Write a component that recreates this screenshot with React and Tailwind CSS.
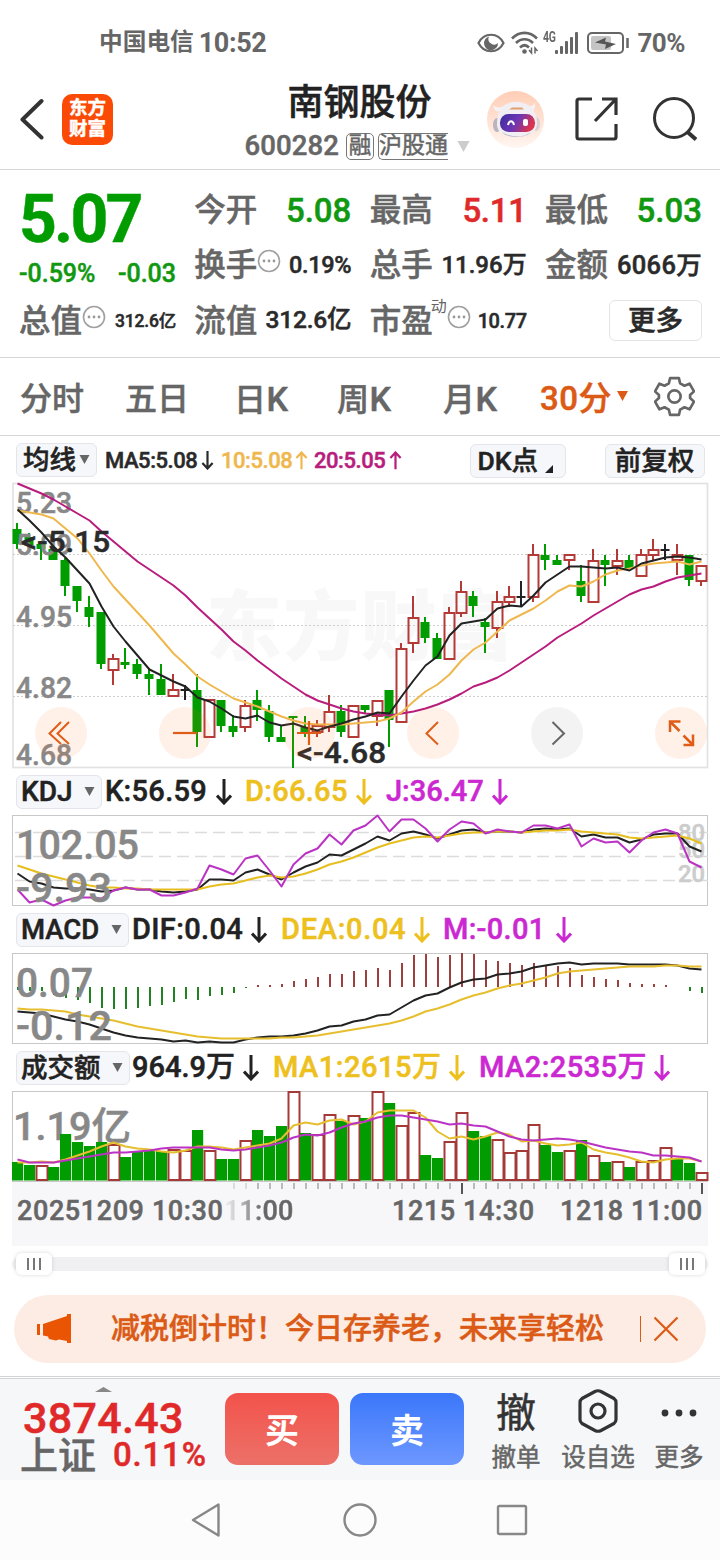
const UP = "#b43a38";
const DOWN = "#009c00";

// [type, high, top, bottom, low]
const candles = [
  ["g", 523, 529, 544, 549], ["g", 533, 537, 545, 549], ["g", 541, 544, 549, 560], ["g", 549, 549, 560, 560],
  ["g", 558, 560, 586, 596], ["g", 586, 586, 601, 612], ["g", 596, 607, 617, 627], ["g", 612, 612, 664, 669],
  ["r", 654, 658, 670, 685], ["g", 648, 662, 665, 669], ["g", 659, 664, 674, 679], ["g", 669, 674, 679, 695],
  ["g", 664, 679, 695, 695], ["r", 674, 689, 696, 696], ["b", 685, 689, 690, 700], ["g", 674, 690, 732, 747],
  ["r", 699, 699, 737, 737], ["g", 700, 700, 726, 732], ["g", 715, 726, 732, 737], ["r", 700, 705, 727, 732],
  ["g", 690, 700, 710, 721], ["g", 705, 711, 737, 742], ["g", 726, 737, 742, 742], ["g", 716, 716, 718, 768],
  ["g", 716, 727, 732, 737], ["r", 720, 725, 732, 737], ["r", 695, 711, 727, 732], ["g", 705, 711, 732, 737],
  ["r", 705, 705, 737, 737], ["g", 705, 705, 710, 714], ["r", 700, 700, 716, 726], ["g", 690, 690, 720, 747],
  ["r", 643, 648, 722, 722], ["r", 596, 617, 643, 653], ["g", 617, 622, 638, 643], ["g", 633, 638, 659, 659],
  ["r", 607, 612, 659, 659], ["r", 581, 591, 613, 617], ["g", 591, 596, 606, 617], ["g", 618, 622, 627, 653],
  ["r", 591, 601, 628, 638], ["r", 586, 596, 602, 607], ["b", 581, 596, 597, 607], ["r", 544, 554, 597, 602],
  ["g", 544, 555, 560, 570], ["g", 555, 560, 565, 565], ["r", 554, 554, 560, 570], ["g", 565, 581, 596, 602],
  ["r", 549, 560, 602, 602], ["g", 555, 560, 565, 586], ["r", 549, 560, 566, 575], ["g", 555, 560, 569, 569],
  ["r", 549, 554, 576, 576], ["r", 539, 549, 555, 560], ["b", 544, 549, 550, 560], ["r", 544, 554, 560, 575],
  ["g", 555, 555, 580, 586], ["r", 565, 565, 581, 586],
];

const ma5 = [509, 520, 532, 546, 557, 570, 583, 606, 626, 641, 655, 669, 675, 681, 686, 697, 701, 708, 716, 718, 715, 722, 725, 723, 727, 730, 726, 723, 719, 716, 712, 713, 696, 680, 665, 656, 635, 623, 621, 619, 608, 605, 606, 595, 582, 574, 566, 566, 567, 568, 567, 570, 563, 560, 557, 556, 557, 559];
const ma10 = [510, 512, 514, 518, 528, 538, 553, 570, 586, 599, 612, 625, 639, 653, 664, 676, 684, 691, 698, 702, 706, 711, 716, 720, 723, 724, 724, 724, 723, 722, 721, 718, 712, 701, 691, 684, 674, 660, 649, 642, 631, 620, 614, 608, 600, 591, 585, 586, 581, 574, 570, 568, 565, 563, 562, 561, 564, 561];
const ma20 = [483, 488, 493, 499, 506, 513, 520, 531, 541, 551, 561, 569, 577, 585, 595, 607, 618, 629, 641, 650, 660, 669, 678, 686, 694, 700, 704, 708, 711, 713, 714, 715, 713, 711, 708, 704, 699, 693, 686, 682, 677, 670, 662, 654, 646, 637, 630, 623, 615, 608, 601, 594, 589, 586, 581, 577, 575, 573];

const kLine = [873, 881, 883, 887, 888, 888, 889, 891, 890, 887, 889, 889, 891, 892, 891, 889, 879, 879, 880, 872, 869, 874, 879, 872, 866, 862, 854, 855, 849, 843, 836, 840, 833, 831, 834, 838, 834, 830, 829, 832, 831, 831, 832, 829, 828, 829, 828, 836, 834, 837, 837, 842, 839, 834, 833, 833, 846, 851];
const dLine = [865, 869, 873, 876, 879, 882, 885, 887, 887, 888, 888, 889, 889, 889, 889, 889, 886, 884, 883, 880, 877, 875, 877, 876, 873, 869, 864, 861, 857, 852, 847, 843, 840, 837, 836, 837, 835, 833, 832, 832, 831, 831, 832, 831, 830, 830, 829, 831, 832, 833, 834, 837, 838, 837, 836, 835, 838, 843];
const jLine = [889, 902, 899, 905, 900, 897, 897, 898, 890, 887, 889, 889, 895, 895, 892, 888, 865, 869, 874, 858, 855, 870, 886, 864, 853, 848, 834, 844, 830, 825, 815, 831, 819, 819, 828, 841, 829, 821, 823, 833, 829, 831, 832, 825, 825, 828, 824, 846, 838, 842, 841, 852, 840, 832, 829, 833, 861, 867];

const macd = [990, 991, 991, 995, 998, 1000, 1003, 1008, 1009, 1009, 1008, 1006, 1005, 1002, 999, 1000, 996, 995, 993, 988, 985, 985, 984, 981, 979, 977, 974, 974, 971, 970, 968, 970, 963, 955, 954, 957, 955, 953, 954, 960, 961, 963, 965, 963, 966, 966, 968, 975, 977, 979, 980, 983, 984, 984, 985, 987, 991, 993];
const dif = [1011, 1012, 1013, 1016, 1019, 1021, 1024, 1028, 1032, 1035, 1037, 1038, 1039, 1041, 1040, 1042, 1041, 1042, 1042, 1039, 1037, 1036, 1036, 1035, 1033, 1030, 1026, 1025, 1021, 1019, 1015, 1014, 1007, 1000, 995, 993, 987, 982, 979, 978, 974, 973, 971, 967, 965, 963, 962, 964, 963, 963, 963, 964, 964, 964, 964, 965, 968, 969];
const dea = [1008, 1009, 1009, 1010, 1011, 1014, 1016, 1018, 1020, 1023, 1026, 1028, 1030, 1032, 1034, 1036, 1037, 1038, 1038, 1038, 1038, 1038, 1037, 1037, 1036, 1035, 1033, 1031, 1029, 1027, 1025, 1023, 1020, 1016, 1011, 1008, 1004, 999, 995, 992, 988, 985, 983, 980, 977, 973, 971, 970, 969, 968, 967, 966, 966, 966, 965, 965, 966, 966];

const volColors = "ggrgggggrggggrrgrggrgggrgrrgrgrgrrggrrggrrrrggrgrgrgrrrggr";
const vol = [1162, 1165, 1165, 1167, 1134, 1142, 1146, 1142, 1144, 1157, 1152, 1151, 1151, 1149, 1150, 1130, 1150, 1159, 1159, 1140, 1130, 1136, 1126, 1091, 1133, 1134, 1114, 1121, 1115, 1118, 1091, 1103, 1125, 1112, 1155, 1158, 1141, 1112, 1131, 1136, 1139, 1152, 1150, 1124, 1145, 1152, 1150, 1140, 1155, 1162, 1161, 1167, 1161, 1160, 1147, 1159, 1163, 1172];
const volMa1 = [1162, 1162, 1161, 1162, 1159, 1155, 1151, 1146, 1142, 1146, 1148, 1149, 1151, 1152, 1150, 1146, 1146, 1147, 1149, 1147, 1145, 1143, 1138, 1125, 1122, 1124, 1120, 1119, 1124, 1121, 1112, 1110, 1110, 1110, 1117, 1131, 1138, 1136, 1139, 1136, 1132, 1134, 1141, 1140, 1143, 1145, 1144, 1142, 1149, 1152, 1154, 1157, 1161, 1162, 1159, 1158, 1158, 1161];
const volMa2 = [1159, 1162, 1162, 1162, 1160, 1158, 1156, 1154, 1152, 1152, 1151, 1150, 1148, 1147, 1147, 1147, 1147, 1149, 1150, 1149, 1147, 1145, 1142, 1137, 1134, 1135, 1132, 1127, 1123, 1121, 1117, 1115, 1115, 1117, 1119, 1121, 1124, 1123, 1125, 1126, 1131, 1136, 1139, 1140, 1139, 1138, 1139, 1141, 1144, 1147, 1149, 1151, 1152, 1155, 1155, 1156, 1157, 1161];

const cx = (i) => 17.5 + i * 12;

function Line({ data, color }) {
  return (
    <polyline
      points={data.map((y, i) => `${cx(i)},${y + 0.5}`).join(" ")}
      fill="none"
      stroke={color}
      strokeWidth="2"
      strokeLinejoin="round"
    />
  );
}

function Label({ x = 17, y, w, size = 29.5, color = "#888888", children }) {
  return (
    <text x={x} y={y} fontSize={size} fill={color} stroke={color} strokeWidth="0.5" textLength={w} lengthAdjust="spacingAndGlyphs" className="font-medium">
      {children}
    </text>
  );
}

function Arrow({ up, className = "h-[26px] w-4" }) {
  return (
    <svg viewBox="0 0 16 26" className={`shrink-0 ${className}`} fill="none" stroke="currentColor" strokeWidth="3">
      <path d={up ? "M8 25V2M1 9.5L8 2l7 7.5" : "M8 0v24M1 16.5L8 24l7-7.5"} />
    </svg>
  );
}

function Triangle({ className }) {
  return (
    <svg viewBox="0 0 10 9" className={className} fill="currentColor">
      <path d="M0 0h10L5 9z" />
    </svg>
  );
}

function Chip({ className, children }) {
  return (
    <button className={`flex h-[34px] shrink-0 items-center rounded-md border border-[#e3e5ea] bg-[#f6f7fa] font-medium text-[#222] ${className}`}>
      {children}
    </button>
  );
}

function Reading({ className, children }) {
  return (
    <div className={`flex shrink-0 items-center justify-between pt-px text-[29px] font-medium ${className}`}>
      <span>{children}</span>
      <Arrow />
    </div>
  );
}

function Dots() {
  return (
    <svg viewBox="0 0 24 24" className="mb-2 size-6 shrink-0" fill="#999">
      <circle cx="12" cy="12" r="10.5" fill="none" stroke="#a0a0a0" strokeWidth="1.6" />
      <circle cx="7" cy="12" r="1.4" />
      <circle cx="12" cy="12" r="1.4" />
      <circle cx="17" cy="12" r="1.4" />
    </svg>
  );
}

function StatusBar() {
  return (
    <div className="flex h-[84px] items-center pt-0.5 pr-[35px] pl-[99px] font-bold text-[#666] [-webkit-text-stroke:0]">
      <span className="text-[23.7px]">中国电信</span>
      <span className="ml-[5px] text-[27px] tracking-[-0.4px]">10:52</span>
      <div className="ml-auto flex items-center pb-px">
        <svg viewBox="0 0 28 20" className="h-5 w-7" fill="none" stroke="#666" strokeWidth="2.2">
          <path d="M1.5 10C7-1 21-1 26.5 10 21 21 7 21 1.5 10z" />
          <path d="M12 3.5A7 7 0 1 0 21 10a5.500 5.500 0 0 1-7 0.500 5 5 0 0 1-2-7z" fill="#666" stroke="none" />
        </svg>
        <svg viewBox="0 0 28 24" className="ml-1.5 h-6 w-7" fill="none" stroke="#666" strokeWidth="2.6">
          <path d="M1 7.5C8 0 19 0 26 7.500M5 12c5-5 12-5 17 0M9 16.500c3-3 6-3 9 0" />
          <circle cx="13.500" cy="20.500" r="2.300" fill="#666" stroke="none" />
          <path d="M20.500 16.500v5.500l-2.500-3M24 22.500v-5.500l2.500 3" strokeWidth="1.500" />
        </svg>
        <span className="mb-3 ml-1 w-3">
          <span className="inline-block origin-left scale-x-75 text-[14px] tracking-[-0.3px]">4G</span>
        </span>
        <svg viewBox="0 0 24 22" className="h-[22px] w-6" fill="#666">
          <rect y="18" width="3" height="4" rx="1" />
          <rect x="5" y="14" width="3" height="8" rx="1" />
          <rect x="10" y="9" width="3" height="13" rx="1" />
          <rect x="15" y="5" width="3" height="17" rx="1" />
          <rect x="20" width="3" height="22" rx="1" />
        </svg>
        <svg viewBox="0 0 42 22" className="ml-2 h-[22px] w-[42px]">
          <rect x="1" y="1" width="35" height="20" rx="4" fill="none" stroke="#666" strokeWidth="2" />
          <rect x="4" y="4" width="20" height="14" rx="2" fill="#c4c4c4" />
          <path d="M8 10.500l11-5-1 4 11 2.500-11 5 1-4.500z" fill="#555" />
          <path d="M40.500 6v10" stroke="#666" strokeWidth="2.500" />
        </svg>
        <span className="ml-2 pt-0.5 text-[26px] tracking-[-0.500px]">70%</span>
      </div>
    </div>
  );
}

function Robot() {
  return (
    <svg viewBox="0 0 57 57" className="size-[57px]">
      <defs>
        <linearGradient id="halo" x1="0" y1="0" x2="0" y2="1">
          <stop offset="0" stopColor="#ffcdb5" />
          <stop offset="1" stopColor="#fff6f1" />
        </linearGradient>
        <linearGradient id="visor" x1="0" y1="0" x2="1" y2="0.300">
          <stop offset="0" stopColor="#3c2c9c" />
          <stop offset="0.550" stopColor="#6d36b4" />
          <stop offset="1" stopColor="#dc3550" />
        </linearGradient>
      </defs>
      <circle cx="28.500" cy="28.500" r="28.500" fill="url(#halo)" />
      <ellipse cx="10" cy="34" rx="4" ry="7" fill="#b9b4bd" />
      <ellipse cx="49" cy="33" rx="4" ry="7" fill="#d8d2d6" />
      <path d="M6 14c1 6 4 7 8 6l4-5c-5 2-9 2-12-1zM48 12c1 6-2 8-6 8l-4-5c5 1 8 0 10-3z" fill="#f4f2f4" />
      <path d="M10 33c0-14 6-22 19-22s21 8 21 21c0 9-8 14-20 14s-20-4-20-13z" fill="#f1eff3" />
      <path d="M15 41c8 6 22 6 29 0-4 6-24 7-29 0z" fill="#aaa5b4" />
      <path d="M22 18.500l3-2h10l2 2z" fill="#e0a070" />
      <rect x="13" y="23" width="35" height="18" rx="8.500" fill="url(#visor)" />
      <path d="M21 34c1-5 5-5 6 0" fill="none" stroke="#fff" strokeWidth="2" />
      <rect x="36" y="28" width="5" height="7" rx="2" fill="#fff" />
    </svg>
  );
}

function Header() {
  return (
    <header className="flex h-[86px] border-b border-[#d6d6d6]">
      <svg viewBox="0 0 26 42" className="mt-[14px] ml-[19px] h-[42px] w-[26px]" fill="none" stroke="#333" strokeWidth="4" strokeLinecap="round" strokeLinejoin="round">
        <path d="M22.500 3L3.500 21.500l19 18" />
      </svg>
      <div className="mt-[10px] ml-[17px] flex h-[51px] w-[51px] flex-col items-center justify-center rounded-[10px] bg-[#fb4a06] pb-px text-[18.500px] leading-[21px] font-bold text-white">
        <span>东方</span>
        <span>财富</span>
      </div>
      <div className="ml-[131.500px] flex w-[231px] flex-col">
        <h1 className="ml-[43px] h-10 text-[36px] leading-[38px] font-medium text-[#222]">南钢股份</h1>
        <div className="flex h-11 items-center text-[#666]">
          <span className="text-[27.500px] font-medium tracking-[0.100px]">600282</span>
          <span className="ml-[7px] flex h-[27px] w-7 items-center justify-center rounded-[5px] border-[1.500px] border-[#777] text-[22.500px]">融</span>
          <span className="ml-1 flex h-[27px] w-[70px] items-center justify-center rounded-l-[5px] border-[1.500px] border-r-0 border-[#777] text-[23px]">沪股通</span>
          <Triangle className="ml-[7px] h-[11px] w-[17px] shrink-0 text-[#ccc]" />
        </div>
      </div>
      <div className="mt-[7px] ml-[11px]">
        <Robot />
      </div>
      <svg viewBox="0 0 44 44" className="mt-[13px] ml-[31px] size-11" fill="none" stroke="#333" strokeWidth="3.200">
        <path d="M17 2H4a2 2 0 0 0-2 2v36a2 2 0 0 0 2 2h35a2 2 0 0 0 2-2V27M27 2h14v16M41 2L20 24" />
      </svg>
      <svg viewBox="0 0 46 46" className="mt-[12px] ml-[33px] size-[46px]" fill="none" stroke="#333" strokeWidth="3">
        <circle cx="22" cy="22" r="19.500" />
        <path d="M35.500 36l8.500 7.500" strokeWidth="4" />
      </svg>
    </header>
  );
}

function Cell({ label, children }) {
  return (
    <div className="flex h-[55.500px] w-[157px] items-center">
      <span className="shrink-0 pt-px text-[31.500px] text-[#666]">{label}</span>
      {children}
    </div>
  );
}

function Quote() {
  return (
    <section className="flex h-[188px] justify-between border-b border-[#d6d6d6] pt-[12px] pr-[18px] pl-[19px] font-medium text-[#2a2a2a]">
      <div className="w-[157px]">
        <div className="h-[67px] text-[66px] leading-[76px] font-bold tracking-[-2.800px] text-[#009c00]">5.07</div>
        <div className="flex h-[44px] items-center justify-between pt-1.5 text-[25px] text-[#119811]">
          <span>-0.59%</span>
          <span>-0.03</span>
        </div>
        <Cell label="总值">
          <Dots />
          <span className="ml-auto text-[17.500px] tracking-[-0.200px]">312.6亿</span>
        </Cell>
      </div>
      <div>
        <Cell label="今开"><span className="ml-auto pt-px text-[33px] text-[#119811]">5.08</span></Cell>
        <Cell label="换手">
          <Dots />
          <span className="ml-auto text-[23.500px] tracking-[-0.300px]">0.19%</span>
        </Cell>
        <Cell label="流值"><span className="ml-auto text-[24.500px] tracking-[-0.200px]">312.6亿</span></Cell>
      </div>
      <div>
        <Cell label="最高"><span className="ml-auto pt-px text-[33px] tracking-[-0.300px] text-[#e02a2a]">5.11</span></Cell>
        <Cell label="总手"><span className="ml-auto text-[24px]">11.96万</span></Cell>
        <Cell label="市盈">
          <span className="-ml-0.5 mb-7 text-[16px] font-normal text-[#666] [-webkit-text-stroke:0]">动</span>
          <Dots />
          <span className="ml-auto text-[20px] tracking-[-0.400px]">10.77</span>
        </Cell>
      </div>
      <div>
        <Cell label="最低"><span className="ml-auto pt-px text-[33px] text-[#119811]">5.03</span></Cell>
        <Cell label="金额"><span className="ml-auto text-[25.500px] tracking-[0.300px]">6066万</span></Cell>
        <div className="flex h-[54px] items-center justify-end">
          <button className="h-[41px] w-[93px] rounded-md border border-[#e4e4e4] text-[27.500px] leading-[40px]">更多</button>
        </div>
      </div>
    </section>
  );
}

function Tabs() {
  return (
    <nav className="flex h-[78px] items-center border-b border-[#d6d6d6] pt-[5px] pl-5 text-[32px] font-medium text-[#666]">
      <span className="w-[105px]">分时</span>
      <span className="w-[109px]">五日</span>
      <span className="w-[103px] tracking-[0.500px]">日<span className="text-[34px]">K</span></span>
      <span className="w-[106px] tracking-[0.500px]">周<span className="text-[34px]">K</span></span>
      <span className="w-[97px] tracking-[0.500px]">月<span className="text-[34px]">K</span></span>
      <span className="w-[77px] text-[33px] tracking-[0.500px] text-[#db5a15]">30分</span>
      <Triangle className="mb-1.5 h-[10px] w-[11px] text-[#db5a15]" />
      <svg viewBox="0 0 40 40" className="mb-1.5 ml-[26px] size-[41px]" fill="none" stroke="#666" strokeWidth="2.600" strokeLinejoin="round">
        <path d="M15.700 2h8.600l1.200 5.200 4.200 2.300 5-2 4.300 7.500-3.800 3.600v2.800l3.800 3.600-4.300 7.500-5-2-4.200 2.300-1.200 5.200h-8.600l-1.200-5.200-4.200-2.300-5 2L1 25l3.800-3.600v-2.800L1 15l4.300-7.500 5 2 4.200-2.300z" />
        <circle cx="20" cy="20" r="6" />
      </svg>
    </nav>
  );
}

function ChartBar() {
  return (
    <div className="flex h-[47px] items-center pl-4 text-[22px] font-medium tracking-[-0.450px]">
      <Chip className="w-[81px] justify-between pr-1.5 pl-1.5 text-[26.500px] tracking-normal">
        均线
        <Triangle className="h-[9px] w-[11px] text-[#666]" />
      </Chip>
      <div className="ml-2 flex w-[109px] items-center justify-between pt-0.5 text-[#2a2a2a]">
        <span>MA5:5.08</span>
        <Arrow className="h-[19px] w-[13px]" />
      </div>
      <div className="ml-[7px] flex w-[87px] items-center justify-between pt-0.5 text-[#efb84e]">
        <span>10:5.08</span>
        <Arrow up className="h-[19px] w-[13px]" />
      </div>
      <div className="ml-[6px] flex w-[88px] items-center justify-between pt-0.5 text-[#b81d7d]">
        <span>20:5.05</span>
        <Arrow up className="h-[19px] w-[13px]" />
      </div>
      <Chip className="mt-0.5 ml-[67.500px] w-[96px] pl-[7px] text-[26.500px] tracking-normal">
        DK点
        <svg viewBox="0 0 8 8" className="mt-4 ml-[7px] size-2">
          <path d="M8 0v8H0z" fill="#222" />
        </svg>
      </Chip>
      <Chip className="mt-0.5 ml-[39px] w-[100px] justify-center text-[26.500px] tracking-normal">前复权</Chip>
    </div>
  );
}

function KChart() {
  return (
    <div className="relative mx-3 h-[285px]">
      <svg viewBox="12 483 696 285" className="h-[285px] w-[696px] overflow-visible">
        <text x="206" y="654" fontSize="76" fill="#f8f8f8" textLength="308" className="font-black">东方财富</text>
        <rect x="13" y="483.500" width="694.500" height="284" fill="none" stroke="#e2e2e2" strokeWidth="1.700" />
        {[554.5, 625.5, 696.5].map((y) => (
          <path key={y} d={`M13 ${y}H708`} stroke="#cfcfcf" strokeDasharray="2 2" />
        ))}
        {candles.map(([type, high, top, bottom, low], i) => {
          const x = cx(i) - 0.5;
          if (type === "r") {
            return (
              <g key={i} stroke={UP} strokeWidth="2" fill="none">
                <path d={`M${x} ${high}V${top}M${x} ${bottom}V${low}`} />
                <rect x={x - 4.5} y={top + 1} width="10" height={bottom - top - 1} />
              </g>
            );
          }
          const color = type === "g" ? DOWN : "#222";
          return (
            <g key={i} fill={color}>
              <rect x={x - 1} y={high} width="2" height={low - high} />
              <rect x={x - 4.5} y={top} width="9" height={type === "g" ? bottom - top : 2} />
            </g>
          );
        })}
        <Label x="16" y="513" w="56">5.23</Label>
        <Label x="16" y="555" w="56">5.09</Label>
        <Label x="16" y="627" w="56">4.95</Label>
        <Label x="16" y="698" w="56">4.82</Label>
        <Label x="16" y="765" w="56">4.68</Label>
        <Line data={ma20} color="#b81d7d" />
        <Line data={ma10} color="#efb84e" />
        <Line data={ma5} color="#222222" />
        <Label x="21" y="552" w="89" color="#2a2a2a">&lt;-5.15</Label>
        <Label x="297" y="763" w="89" color="#2a2a2a">&lt;-4.68</Label>
      </svg>
      <div className="absolute top-[224px] left-[23px] flex gap-[72px] text-[#e05d18] [&>button]:size-[52px] [&>button]:rounded-full [&>button]:bg-[#fb6a20]/10">
        <button>
          <svg viewBox="0 0 52 52" fill="none" stroke="currentColor" strokeWidth="2"><path d="M26 15L14.500 26.500 26 37M34 15L22.500 26.500 34 37" /></svg>
        </button>
        <button>
          <svg viewBox="0 0 52 52" fill="none" stroke="currentColor" strokeWidth="2.200"><path d="M14 26h24" /></svg>
        </button>
        <button>
          <svg viewBox="0 0 52 52" fill="none" stroke="currentColor" strokeWidth="2.200"><path d="M14 26h24M26 14v24" /></svg>
        </button>
        <button>
          <svg viewBox="0 0 52 52" fill="none" stroke="currentColor" strokeWidth="2"><path d="M31 15L19.500 26.500 31 37.500" /></svg>
        </button>
        <button className="bg-[#888]/10! text-[#666]">
          <svg viewBox="0 0 52 52" fill="none" stroke="currentColor" strokeWidth="2"><path d="M21.500 15L33 26.500 21.500 37.500" /></svg>
        </button>
        <button>
          <svg viewBox="0 0 52 52" fill="none" stroke="currentColor" strokeWidth="2.500"><path d="M15 25V14.500h10.500M15 14.500l9.500 9.500M28.500 38H38V27.500M38 38l-9.500-9.500" /></svg>
        </button>
      </div>
    </div>
  );
}

function Kdj() {
  return (
    <>
      <div className="flex h-[47px] items-center pl-4">
        <Chip className="w-[86px] justify-between pr-1.5 pl-1 text-[28px]">
          KDJ
          <Triangle className="h-[9px] w-[11px] text-[#666]" />
        </Chip>
        <Reading className="ml-[3px] w-[127px] tracking-[0.300px] text-[#222]">K:56.59</Reading>
        <Reading className="ml-[13px] w-[127px] tracking-[0.300px] text-[#edc01e]">D:66.65</Reading>
        <Reading className="ml-[14px] w-[122px] text-[#cb28d2]">J:36.47</Reading>
      </div>
      <svg viewBox="12 815 696 91" className="mx-3 h-[91px] w-[696px] overflow-visible">
        <rect x="12.500" y="815.500" width="695" height="90" fill="none" stroke="#c8c8c8" />
        {[832.5, 856.5, 880.5].map((y) => (
          <path key={y} d={`M15 ${y}H708`} stroke="#dcdcdc" strokeWidth="1.500" strokeDasharray="12 6" />
        ))}
        <Label x="678" y="841" w="27" size="23" color="#cccccc">80</Label>
        <Label x="678" y="858" w="27" size="23" color="#cccccc">50</Label>
        <Label x="678" y="881.500" w="27" size="23" color="#cccccc">20</Label>
        <Line data={kLine} color="#222222" />
        <Line data={dLine} color="#e6be1e" />
        <Line data={jLine} color="#bb33c4" />
        <Label x="16" y="858.500" w="123" size="41">102.05</Label>
        <Label x="16" y="902" w="96" size="41">-9.93</Label>
      </svg>
    </>
  );
}

function Macd() {
  return (
    <>
      <div className="flex h-[47px] items-center pl-4">
        <Chip className="w-[113px] justify-between pr-1.5 pl-1 text-[27.500px]">
          MACD
          <Triangle className="h-[9px] w-[11px] text-[#666]" />
        </Chip>
        <Reading className="ml-[3px] w-[135px] tracking-[0.350px] text-[#222]">DIF:0.04</Reading>
        <Reading className="ml-[14px] w-[149px] tracking-[0.700px] text-[#edc01e]">DEA:0.04</Reading>
        <Reading className="ml-[13px] w-[129px] tracking-[0.300px] text-[#cb28d2]">M:-0.01</Reading>
      </div>
      <svg viewBox="12 953 696 91" className="mx-3 h-[91px] w-[696px] overflow-visible">
        <rect x="12.500" y="953.500" width="695" height="90" fill="none" stroke="#c8c8c8" />
        {macd.map((y, i) => (
          <path key={i} d={`M${cx(i) + 0.5} 987V${y}`} stroke={y < 987 ? "#9c403e" : "#218221"} strokeWidth="2" />
        ))}
        <Line data={dif} color="#222222" />
        <Line data={dea} color="#e6be2e" />
        <Label x="16" y="996.500" w="77" size="41">0.07</Label>
        <Label x="16" y="1040" w="96" size="41">-0.12</Label>
      </svg>
    </>
  );
}

function Volume() {
  return (
    <>
      <div className="flex h-[47px] items-center pl-4">
        <Chip className="w-[114px] justify-between pr-1.5 pl-1 text-[26.500px]">
          成交额
          <Triangle className="h-[9px] w-[11px] text-[#666]" />
        </Chip>
        <Reading className="ml-[2px] w-[127px] text-[#222]">964.9万</Reading>
        <Reading className="ml-[14px] w-[192px] tracking-[0.500px] text-[#edc01e]">MA1:2615万</Reading>
        <Reading className="ml-[14px] w-[191px] tracking-[0.450px] text-[#cb28d2]">MA2:2535万</Reading>
      </div>
      <svg viewBox="12 1091 696 91" className="mx-3 h-[91px] w-[696px] overflow-visible">
        <rect x="12.500" y="1091.500" width="695" height="90" fill="none" stroke="#c8c8c8" />
        <Label x="13" y="1139.500" w="118" size="39">1.19亿</Label>
        {vol.map((y, i) =>
          volColors[i] === "g" ? (
            <rect key={i} x={cx(i) - 5.5} y={y} width="11.200" height={1180.5 - y} fill={DOWN} />
          ) : (
            <rect key={i} x={cx(i) - 5} y={y + 1} width="11" height={1179 - y} fill="#fff" stroke="#a33a38" strokeWidth="2" />
          )
        )}
        <Line data={volMa1} color="#e6be2e" />
        <Line data={volMa2} color="#bb33c4" />
      </svg>
    </>
  );
}

function TimeAxis() {
  return (
    <div className="mx-3 h-16 bg-[#f7f7fa]">
      <svg viewBox="12 1182 696 12" className="block h-3 w-[696px]" stroke="#aaa" strokeWidth="1.600">
        {Array.from({ length: 40 }, (_, n) => n + 18).map((i) => {
          const long = i === 37 || i === 57;
          return (
            <path
              key={i}
              d={`M${cx(i) + 0.5} 1183V${long ? 1194 : 1189}`}
              stroke={long ? "#555" : i < 20 ? "#d4d4d4" : "#aaa"}
              strokeWidth={long ? 2 : 1.6}
            />
          );
        })}
      </svg>
      <div className="flex pt-px pl-[5px] text-[27px] leading-[33px] font-medium tracking-[0.600px] whitespace-nowrap text-[#666]">
        <span className="w-[207px]">20251209 10:30</span>
        <span className="w-[168px] bg-linear-to-r from-[#f7f7fa] to-[#666] to-[40px] bg-clip-text tracking-[0.200px] text-transparent">11:00</span>
        <span className="w-[168px]">1215 14:30</span>
        <span>1218 11:00</span>
      </div>
    </div>
  );
}

function Thumb() {
  return (
    <div className="flex h-[22px] w-9 items-center justify-center gap-1 rounded-md bg-white shadow-[0_0_4px_rgba(0,0,0,0.15)] [&>i]:h-3 [&>i]:w-0.5 [&>i]:bg-[#777]">
      <i /><i /><i />
    </div>
  );
}

function Slider() {
  return (
    <div className="mx-3 flex h-[49px] items-start pt-[11px]">
      <div className="flex h-[14px] w-full items-center justify-between rounded-full bg-[#f0f0f3] pr-[3px] pl-1">
        <Thumb />
        <Thumb />
      </div>
    </div>
  );
}

function Banner() {
  return (
    <div className="mx-[14px] flex h-[68px] items-center rounded-full bg-[#fcece3] text-[#db5a15]">
      <svg viewBox="0 0 36 30" className="ml-[22px] h-[30px] w-9" fill="#ea5504">
        <path d="M1 10h3v11H1zM7 10L31 2V0h4v29h-4v-2l-8-1.500-3 1-7-1.500-1-2.500-5-1z" />
      </svg>
      <span className="ml-[39px] pt-0.5 text-[29px] font-medium">减税倒计时！今日存养老，未来享轻松</span>
      <div className="ml-9 h-[26px] w-px bg-[#db5a15]" />
      <svg viewBox="0 0 26 26" className="ml-3 size-[26px]" fill="none" stroke="currentColor" strokeWidth="2.200">
        <path d="M1.500 1.500l23 23M24.500 1.500l-23 23" />
      </svg>
    </div>
  );
}

function BottomBar() {
  return (
    <footer className="mt-[13px] border-t border-[#d2d4d8] pt-px">
      <div className="flex h-[102px] border-t border-[#d2d4d8] bg-[#f6f7f9]">
        <div className="flex w-[225px] flex-col pl-[23px] font-medium text-[#e02a2a]">
          <div className="flex h-[13px] items-end pl-[72px]">
            <svg viewBox="0 0 17 5" className="h-[5px] w-[17px]"><path d="M0 5l8.500-5L17 5z" fill="#888" /></svg>
          </div>
          <span className="mt-1 h-[41px] text-[43px] leading-[44px] tracking-[0.300px]">3874.43</span>
          <div className="flex h-[35px] items-center">
            <span className="-ml-[3px] w-[93px] pt-1 text-[38px] leading-[35px] text-[#666]">上证</span>
            <span className="text-[33px] tracking-[0.800px]">0.11%</span>
          </div>
        </div>
        <button className="mt-[14px] h-[72px] w-[114px] rounded-[13px] bg-linear-to-b from-[#f2524b] to-[#ec7068] pt-1 text-[34px] font-bold text-white [-webkit-text-stroke:0]">买</button>
        <button className="mt-[14px] ml-[11px] h-[72px] w-[114px] rounded-[13px] bg-linear-to-b from-[#3a77fa] to-[#6d97ff] pt-1 text-[34px] font-bold text-white [-webkit-text-stroke:0]">卖</button>
        <div className="ml-7 flex w-12 flex-col items-center text-[24.500px] text-[#666]">
          <span className="h-[62px] pt-3 text-[40px] leading-[45px] text-[#333]">撤</span>
          <span className="leading-[34px]">撤单</span>
        </div>
        <div className="ml-5 flex w-[76px] flex-col items-center text-[24.500px] text-[#666]">
          <svg viewBox="0 0 42 44" className="mt-[10px] mb-[8px] h-11 w-[42px]" fill="none" stroke="#333" strokeWidth="3.200" strokeLinejoin="round">
            <path d="M18 2.500q3-1.500 6 0l13 7q2 1.500 2 4v17q0 2.500-2 4l-13 7q-3 1.500-6 0l-13-7q-2-1.500-2-4v-17q0-2.500 2-4z" />
            <circle cx="21" cy="22" r="7" />
          </svg>
          <span className="leading-[34px]">设自选</span>
        </div>
        <div className="ml-[18px] flex w-[50px] flex-col items-center text-[24.500px] text-[#666]">
          <svg viewBox="0 0 36 8" className="mt-[30px] mb-[24px] h-2 w-9" fill="#333">
            <circle cx="4" cy="4" r="3.400" />
            <circle cx="18" cy="4" r="3.400" />
            <circle cx="32" cy="4" r="3.400" />
          </svg>
          <span className="leading-[34px]">更多</span>
        </div>
      </div>
    </footer>
  );
}

function NavBar() {
  return (
    <div className="flex h-20 items-center bg-[#fcfcfc] pl-[190px]">
      <svg viewBox="0 0 32 36" className="h-9 w-8" fill="none" stroke="#888" strokeWidth="2.400" strokeLinejoin="round">
        <path d="M28.500 2.500v31L3 18z" />
      </svg>
      <svg viewBox="0 0 36 36" className="ml-[120px] size-9" fill="none" stroke="#888" strokeWidth="2.400">
        <circle cx="18" cy="18" r="15.500" />
      </svg>
      <svg viewBox="0 0 36 36" className="ml-[116px] size-9" fill="none" stroke="#888" strokeWidth="2.400">
        <rect x="4" y="4" width="28" height="28" rx="1.500" />
      </svg>
    </div>
  );
}

export default function App() {
  return (
    <div className="flex h-[1560px] w-[720px] flex-col overflow-hidden bg-white font-['Roboto','Noto_Sans_CJK_SC',sans-serif] whitespace-nowrap [-webkit-text-stroke:0.5px] [&>*]:shrink-0">
      <StatusBar />
      <Header />
      <Quote />
      <Tabs />
      <ChartBar />
      <KChart />
      <Kdj />
      <Macd />
      <Volume />
      <TimeAxis />
      <Slider />
      <Banner />
      <BottomBar />
      <NavBar />
    </div>
  );
}
